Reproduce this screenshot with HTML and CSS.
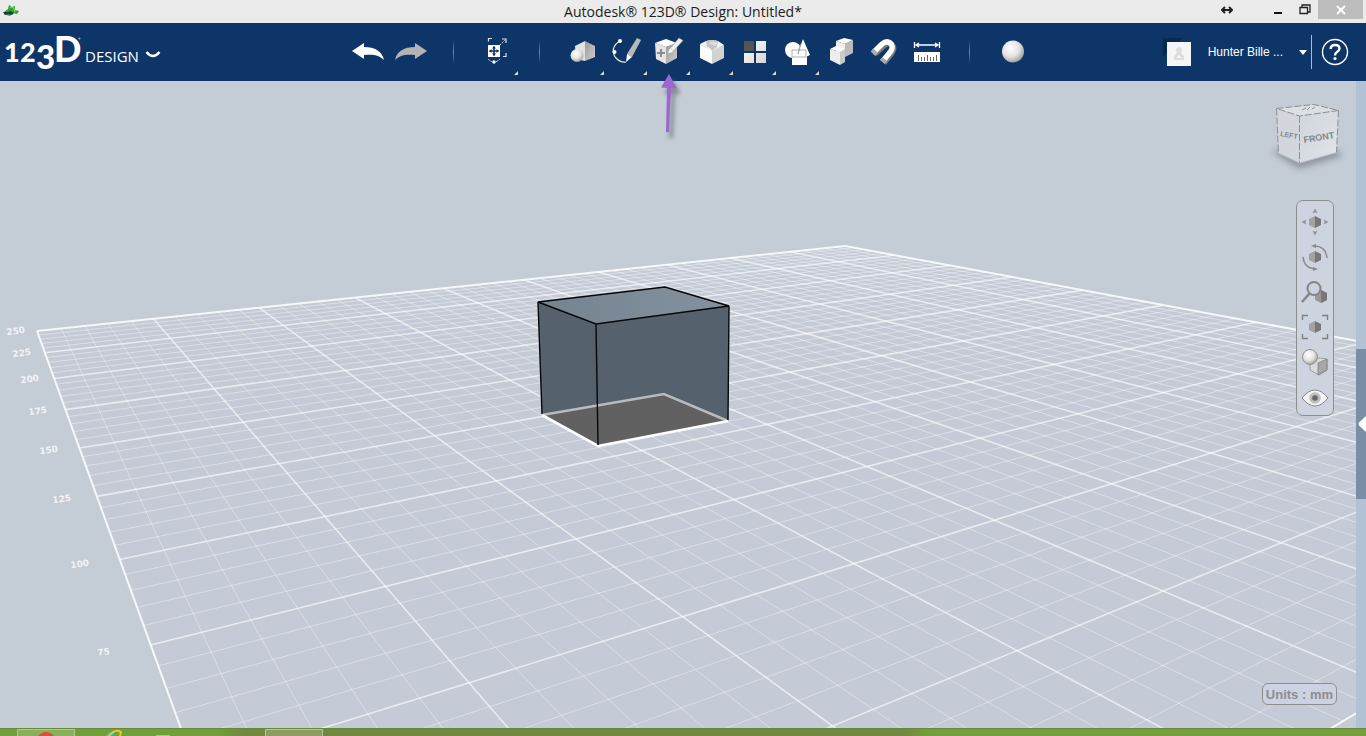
FILE: index.html
```html
<!DOCTYPE html>
<html lang="en">
<head>
<meta charset="utf-8">
<title>Autodesk 123D Design: Untitled*</title>
<link rel="stylesheet" href="styles.css">
</head>
<body>
<svg class="defs" aria-hidden="true">
  <defs>
    <linearGradient id="face" x1="0" y1="0" x2="1" y2="1"><stop offset="0" stop-color="#fff"/><stop offset="1" stop-color="#d4d4d4"/></linearGradient>
    <linearGradient id="shade" x1="0" y1="0" x2="1" y2="1"><stop offset="0" stop-color="#999"/><stop offset="1" stop-color="#d0d0d0"/></linearGradient>
    <radialGradient id="ball" cx=".4" cy=".35" r=".65"><stop offset="0" stop-color="#fff"/><stop offset=".6" stop-color="#e2e2e2"/><stop offset="1" stop-color="#a9a49e"/></radialGradient>
    <linearGradient id="boxtop" x1="0" y1="0" x2="1" y2="0"><stop offset="0" stop-color="#75838f"/><stop offset="1" stop-color="#84919e"/></linearGradient>
    <linearGradient id="cube-front" x1="0" y1="0" x2="1" y2="1"><stop offset="0" stop-color="#cfd4dc"/><stop offset="1" stop-color="#e2e5e9"/></linearGradient>
    <filter id="soft" x="-50%" y="-50%" width="200%" height="200%"><feGaussianBlur stdDeviation="3"/></filter>
    <filter id="soft-small" x="-100%" y="-20%" width="300%" height="140%"><feGaussianBlur stdDeviation="2"/></filter>
  </defs>
</svg>
<div class="app">
  <header class="titlebar">
    <svg class="app-icon" width="16" height="14" viewBox="0 0 16 14" aria-hidden="true"><path d="M1 8l4-3 1-4 3 2 3-1v4l4 1-2 3-4-1-3 3-4-1-2-1z" fill="#2fa52f"/><path d="M0 8l5 0 2-1 4 2-2 2-4-1-3 1z" fill="#20364f"/><path d="M7 3l4 1 1 4" stroke="#76e55c" fill="none"/></svg>
    <h1 class="title">Autodesk® 123D® Design: Untitled*</h1>
    <div class="window-buttons">
      <button class="win move" aria-label="Resize"><svg width="12" height="8" viewBox="0 0 12 8"><path d="M1 4h10M4 1L1 4l3 3M8 1l3 3-3 3" fill="none" stroke="#222" stroke-width="2"/></svg></button>
      <button class="win" aria-label="Minimize"><svg width="10" height="10" viewBox="0 0 10 10"><path d="M1 8h8" stroke="#111" stroke-width="2"/></svg></button>
      <button class="win" aria-label="Restore"><svg width="12" height="11" viewBox="0 0 12 11"><path d="M3 3V1h8v7H9M1 3.500h7.500v6H1z" fill="none" stroke="#222" stroke-width="1.300"/></svg></button>
      <button class="win close" aria-label="Close"><svg width="10" height="10" viewBox="0 0 10 10"><path d="M1 1l8 8M9 1L1 9" stroke="#fff" stroke-width="2"/></svg></button>
    </div>
  </header>

  <nav class="toolbar" aria-label="Main toolbar">
    <button class="brand" aria-label="123D Design menu">
      <svg width="162" height="50" viewBox="0 0 162 50">
        <g class="logo" fill="#fff"><text class="logo-small" x="4" y="35">1</text><text class="logo-small" x="20" y="35">2</text><text class="logo-mid" x="36" y="42">3</text><text class="logo-big" x="54" y="35">D</text></g>
        <text class="logo-word" fill="#fff" x="85" y="35">DESIGN</text>
        <circle cx="79.500" cy="11.500" r="1" fill="#9fb2ca"/>
        <path d="M146.500 25q3 4 6.500 4t6.500-4" fill="none" stroke="#fff" stroke-width="2.400"/>
      </svg>
    </button>
    <div class="tools">
      <button class="tool" aria-label="Undo"><svg viewBox="0 0 36 36"><path d="M2 18L14 10v4c11 0 18 4 20 13-5-5-10-6-20-5v4z" fill="#fff"/></svg></button>
      <button class="tool" aria-label="Redo"><svg viewBox="0 0 36 36"><path d="M34 18L22 10v4C11 14 4 18 2 27c5-5 10-6 20-5v4z" fill="#b3b3b3"/></svg></button>
      <span class="divider"></span>
      <button class="tool flag" aria-label="Transform"><svg viewBox="5 1 36 36"><path d="M14 13h12v12H14z" fill="#fff"/><path d="M20 14.500v9M15.500 19h9" fill="none" stroke="#0e3567" stroke-width="1.600"/><path d="M20 14l2 2.500h-4zM20 24l2-2.500h-4zM15 19l2.500-2v4zM25 19l-2.500-2v4z" fill="#0e3567"/><path d="M14.500 9.500v-3H18M28 7h4v4M32 21v3.500h-3" fill="none" stroke="#dce3ec" stroke-width="1.200"/><path d="M26 13l5-5" stroke="#dce3ec" stroke-dasharray="1.500 1"/><path d="M14 27q6 6 12 0" fill="none" stroke="#dce3ec" stroke-dasharray="2 1"/><circle cx="20" cy="30" r="1.700" fill="#fff"/></svg></button>
      <span class="divider"></span>
      <button class="tool flag" aria-label="Primitives"><svg viewBox="0 0 36 36"><path d="M10 13l10-5v20l-9-2z" fill="#e2e2e2"/><path d="M20 8l10 5v11l-10 4z" fill="url(#shade)"/><circle cx="12" cy="22.500" r="6.500" fill="url(#ball)"/></svg></button>
      <button class="tool flag" aria-label="Sketch"><svg viewBox="0 0 36 36"><path d="M12 8C5 12 3 19 8 25q5 5 10 4" fill="none" stroke="#e5e9ef" stroke-width="1.200"/><circle cx="12" cy="8" r="2" fill="#fff"/><circle cx="6.500" cy="19" r="2" fill="#fff"/><path d="M29 5l4 2-9 17-5-3z" fill="#b9b9b9"/><path d="M19 21l5 3-6 5z" fill="#fff"/></svg></button>
      <button class="tool flag" aria-label="Construct"><svg viewBox="0 0 36 36"><path d="M4 10l11-4 11 4-11 4z" fill="#fff"/><path d="M4 10l11 4v17L5 26z" fill="#e5e5e5"/><path d="M15 14l11-4v15l-11 6z" fill="url(#shade)"/><path d="M10 16v8M6 20h8" stroke="#8c8c8c" stroke-width="2"/><path d="M28 5l4 2.500-10 11-3-3z" fill="#eee" stroke="#999" stroke-width=".5"/><path d="M19 15.500l3 3-5 2z" fill="#fff"/></svg></button>
      <button class="tool flag" aria-label="Modify"><svg viewBox="0 0 36 36"><path d="M6 11l6-3 6-1 6 1 6 4-12 7z" fill="#f2f2f2"/><path d="M6 11l12 7v13L6 25z" fill="#fafafa"/><path d="M18 18l12-6v13l-12 6z" fill="#d2d2d2"/><path d="M12 8q6-2 12 0l-1 6q-3 2-5 4-2-4-5-4z" fill="#c4c4c4"/><path d="M15 9q4-1 8 0l-1 4q-5-1-7-4z" fill="#dedede"/></svg></button>
      <button class="tool flag" aria-label="Pattern"><svg viewBox="0 0 36 36"><path d="M7 8h10v10H7z" fill="#555"/><path d="M19 8h10v10H19zM7 20h10v10H7zM19 20h10v10H19z" fill="url(#face)"/></svg></button>
      <button class="tool flag" aria-label="Grouping"><svg viewBox="0 0 36 36"><circle cx="13" cy="17" r="8" fill="#fff"/><path d="M23 6l7 16q-6 4-13 0z" fill="#fff"/><path d="M12 21h15v11H12z" fill="#fff"/><path d="M12 22v-5h14v7H12zM18 21l3-10q-2 3-3 10" fill="none" stroke="#999" stroke-width=".8"/></svg></button>
      <button class="tool" aria-label="Combine"><svg viewBox="0 0 36 36"><path d="M13 8l8-3 9 2-8 4z" fill="#fff"/><path d="M13 8l9 3v14l-9-5z" fill="#eee"/><path d="M22 11l8-4v13l-8 4z" fill="#bbb"/><path d="M7 16l6-3 9 3-5 3z" fill="#fff"/><path d="M7 16l10 3v13L7 27z" fill="#ededed"/><path d="M17 19l5-3v13l-5 3z" fill="#c9c9c9"/></svg></button>
      <button class="tool" aria-label="Snap"><svg viewBox="0 0 36 36"><path d="M8 20l9-8c6-5 13 0 8 7l-8 10" fill="none" stroke="#77777d" stroke-width="5.500" transform="translate(1 1)"/><path d="M8 19l8-8c6-5 13 0 9 7l-8 10" fill="none" stroke="#fff" stroke-width="5.500"/><path d="M6 17l4.500 4.500M15 25.500l5 4" stroke="#aaa" stroke-width="4"/></svg></button>
      <button class="tool" aria-label="Measure"><svg viewBox="0 0 36 36"><path d="M5.500 9v6M30.500 9v6M8 12h20M10 10l-3 2 3 2M26 10l3 2-3 2" fill="none" stroke="#fff" stroke-width="1.300"/><path d="M5 19h26v10H5z" fill="#fff"/><path d="M9.500 22v6M12.500 24v4M15.500 24v4M18.500 22v6M21.500 24v4M24.500 24v4M27.500 22v6" stroke="#666"/></svg></button>
      <span class="divider"></span>
      <button class="tool" aria-label="Material"><svg viewBox="0 0 36 36"><circle cx="18" cy="18.500" r="11" fill="url(#ball)"/></svg></button>
    </div>
    <div class="account">
      <button class="user"><svg width="28" height="28" viewBox="-4 -4 28 28" aria-hidden="true"><path d="M-4-4h20L-4 15z" fill="#082a4c"/><path d="M0 0h24v24H0z" fill="#f5f5f5"/><path d="M12 5a3.500 3.500 0 0 1 2 6l3 3v4H7v-4l3-3a3.500 3.500 0 0 1 2-6z" fill="#ddd"/><path d="M9 16l3-3 3 3z" fill="#f5f5f5"/></svg><span class="user-name">Hunter Bille ...</span><span class="caret"></span></button>
      <button class="help" aria-label="Help"><svg width="28" height="28" viewBox="0 0 28 28"><circle cx="14" cy="14" r="12.500" fill="none" stroke="#fff" stroke-width="1.400"/><path d="M9.500 11q.5-4 4.500-4 4.500 0 4.500 3.500 0 2-2.500 3.500-2 1.300-2 3.500" fill="none" stroke="#fff" stroke-width="2.400"/><circle cx="14" cy="20.500" r="1.600" fill="#fff"/></svg></button>
    </div>
    <svg class="pointer" width="28" height="68" viewBox="0 0 28 68" aria-hidden="true"><path d="M15 2l8 14h-6l-2 44h-4l2-44H6z" transform="translate(4 5)" fill="#5c636c" opacity=".6" filter="url(#soft-small)"/><path d="M15 1L23 15.500l-6-.5-2 44h-3l1-44-6-.5z" fill="#9e66cf"/></svg>
  </nav>

  <main class="workspace">
    <section class="scene" aria-label="Modeling canvas">
      <svg class="canvas" viewBox="0 81 1356 647" preserveAspectRatio="xMidYMid slice">
        <g id="grid"></g>
        <g id="ruler" class="ruler"></g>
        <path d="M538 302l58 22 133-18-1 115-64-27-122 21z" fill="#55626d"/>
        <path d="M542 415l122-21 64 27-130 25z" fill="#606160"/>
        <path d="M538 302l127-15 64 19-133 18z" fill="url(#boxtop)"/>
        <path d="M542 415l122-21 64 27" fill="none" stroke="#b9bbbd" stroke-width="2.500"/>
        <path d="M542 415l56 31 130-25" fill="none" stroke="#fff" stroke-width="2.600"/>
        <path d="M538 302l127-15 64 19-133 18zl4 112M596 324l2 121M729 306l-1 114" fill="none" stroke="#050709" stroke-width="1.400"/>
      </svg>
      <svg class="viewcube" width="84" height="76" viewBox="1265 98 84 76" role="img" aria-label="View cube">
        <path d="M1272 152l27 17 44-13-24-20z" fill="#79818d" opacity=".7" filter="url(#soft)"/>
        <path d="M1276.500 108.500l37.500-4 24.500 6-39 5.500z" fill="#dce0e5"/>
        <path d="M1276.500 108.500l23 7.500v47l-21-10z" fill="#d3d7dd"/>
        <path d="M1299.500 116l39-5.500-2 42-37 10.500z" fill="url(#cube-front)"/>
        <path d="M1276.500 108.500l37.500-4 24.500 6-39 5.500zl2 44.500M1299.500 116v47M1338.500 110.500l-2 42" fill="none" stroke="#8d8f91" stroke-dasharray="7 2"/>
        <path d="M1278.500 153l21 10 37-10.500" fill="none" stroke="#bfc3c9"/>
        <path d="M1302 110l4-2M1307 110l3-3M1312 109l3-2" stroke="#8d8f91"/>
        <text class="cube-text" transform="translate(1304 143) rotate(-9)">FRONT</text>
        <text class="cube-text side" transform="translate(1280 136) rotate(10)">LEFT</text>
      </svg>
      <div class="navbar" role="toolbar" aria-label="Navigation">
        <button aria-label="Pan"><svg viewBox="0 0 28 28"><path d="M8 11l6-3v12l-6-3z" fill="#a2a2a2"/><path d="M14 8l6 3v6l-6 3z" fill="#777"/><path d="M12 5l2-4 2 4-2-1zM12 23l2 4 2-4-2 1zM5 12l-4 2 4 2-1-2zM23 12l4 2-4 2 1-2z" fill="#909090" stroke="#909090" stroke-width=".5"/></svg></button>
        <button aria-label="Orbit"><svg viewBox="0 0 28 28"><path d="M8 11l6-3v12l-6-3z" fill="#a2a2a2"/><path d="M14 8l6 3v6l-6 3z" fill="#777"/><path d="M13 3q12 0 13 12M2 14q1 11 12 12" fill="none" stroke="#8b8b8b" stroke-width="1.500"/><path d="M10 3l5-2v4zM17 26l-5-2v4z" fill="#888"/></svg></button>
        <button aria-label="Zoom"><svg viewBox="0 0 28 28"><path d="M14 15l6-3 6 3v7l-6 3-6-3z" fill="#999"/><path d="M20 12l6 3v7l-6 3z" fill="#777"/><circle cx="13" cy="10.500" r="6.500" fill="#ccd3de" stroke="#848484" stroke-width="2"/><path d="M8.500 15.500L1 24" stroke="#848484" stroke-width="2.500"/></svg></button>
        <button aria-label="Fit"><svg viewBox="0 0 28 28"><path d="M8 11l6-3v12l-6-3z" fill="#a2a2a2"/><path d="M14 8l6 3v6l-6 3z" fill="#777"/><path d="M1.500 7V2.500H7M21 2.500h5.500V7M26.500 21v4.500H21M7 25.500H1.500V21" fill="none" stroke="#808080" stroke-width="1.400"/></svg></button>
        <button aria-label="Shading"><svg viewBox="0 0 28 28"><path d="M9 12l9-2 8 1v11l-8 5-9-5z" fill="#d8dadd" stroke="#888" stroke-width=".7"/><path d="M17 15l9-4v11l-9 5z" fill="#a8a8a8" stroke="#777" stroke-width=".7"/><circle cx="9" cy="9" r="7.500" fill="url(#ball)" stroke="#919191"/></svg></button>
        <button aria-label="Visibility"><svg viewBox="0 0 28 28"><path d="M1 15Q14-1 27 15 14 31 1 15z" fill="#f4f4f4" stroke="#858585"/><circle cx="14" cy="15" r="5.800" fill="#bdbdbd"/><circle cx="14" cy="15" r="2.800" fill="#666"/></svg></button>
      </div>
      <button class="units">Units : mm</button>
    </section>
    <aside class="side-strip"><button class="side-handle" aria-label="Open side panel"><svg width="8" height="16" viewBox="0 0 8 16"><path d="M8 0v16L1 9.500Q0 8 1 6.500z" fill="#fff"/></svg></button></aside>
  </main>

  <footer class="taskbar">
    <button class="task open" aria-label="Browser"><svg width="20" height="6" viewBox="0 0 20 6"><path d="M2 6q8-8 16 0z" fill="#db4c3d"/></svg></button>
    <button class="task" aria-label="Internet Explorer"><svg width="24" height="8" viewBox="0 0 24 8"><path d="M5 8q4-6 11-6l-5 6z" fill="#41b7e8"/><path d="M8 8Q15-1 21 3l-1 4" fill="none" stroke="#f0c818" stroke-width="2"/></svg></button>
    <button class="task files" aria-label="Files"><svg width="18" height="8" viewBox="0 0 18 8"><path d="M2 6h14v2H1z" fill="#c9b878"/></svg></button>
    <button class="task open last" aria-label="123D Design"></button>
  </footer>
</div>
<script src="scene.js"></script>
</body>
</html>
```
FILE: styles.css
```css
* { box-sizing: border-box; }
body { margin: 0; background: #c4ccd6; font-family: "Liberation Sans", Arial, sans-serif; }
button { margin: 0; padding: 0; border: 0; background: none; color: inherit; font: inherit; cursor: pointer; }
svg { display: block; }
.defs { position: absolute; width: 0; height: 0; }
.app { display: flex; flex-direction: column; height: 100vh; overflow: hidden; }

.titlebar { display: grid; grid-template-columns: 1fr auto 1fr; flex: none; height: 23px; background: #ebebeb; }
.app-icon { margin: 4px 0 0 3px; }
.title { margin: 0; color: #1c1c1c; font: 400 14px/23px "Open Sans", "Noto Sans", sans-serif; }
.window-buttons { display: flex; justify-content: flex-end; height: 19px; padding-right: 3px; }
.win { display: grid; place-items: center; width: 27px; height: 19px; }
.win.move { margin-right: 24px; }
.win.close { width: 45px; background: #bcbcbc; }

.toolbar { position: relative; display: grid; grid-template-columns: 1fr auto 1fr; align-items: center; flex: none; height: 58px; background: #0e3567; color: #fff; }
.brand { justify-self: start; }
.logo { font-family: Lato, "Open Sans", sans-serif; font-weight: 900; }
.logo-small { font-size: 27px; }
.logo-mid { font-size: 33px; }
.logo-big { font-size: 36px; }
.logo-word { font: 400 15px "Open Sans", "Noto Sans", sans-serif; }
.tools { display: flex; align-items: center; margin-left: 14px; }
.tool { position: relative; display: grid; place-items: center; width: 43px; height: 58px; padding-bottom: 2px; }
.tool svg { width: 36px; height: 36px; }
.flag::after { content: ""; position: absolute; right: 0; bottom: 6px; border: solid transparent; border-width: 0 0 4px 4px; border-bottom-color: #d8d8d8; }
.divider { width: 1px; height: 24px; margin: 0 21px; background: linear-gradient(transparent, #7f8590, transparent); }
.account { display: flex; justify-self: end; align-items: center; padding-right: 17px; }
.user { display: flex; align-items: center; height: 34px; padding-right: 4px; border-right: 1px solid #93c1ea; font-size: 12px; }
.user-name { margin: 0 16px 0 17px; }
.caret { border: 4px solid transparent; border-top: 5px solid #fff; border-bottom: 0; }
.help { margin-left: 9px; }
.pointer { position: absolute; left: 654px; top: 50px; z-index: 2; }

.workspace { display: flex; flex: 1; min-height: 0; }
.scene { position: relative; flex: 1; min-width: 0; overflow: hidden; }
.canvas { width: 100%; height: 100%; }
.ground { fill: #c4cbd6; }
.minor { stroke: #fff; stroke-opacity: .38; stroke-width: 1; }
.major { stroke: #fff; stroke-opacity: .62; stroke-width: 1.6; }
.edge { stroke: #fff; stroke-opacity: .85; stroke-width: 2; }
.ruler text { fill: #fff; fill-opacity: .8; font: 700 9px "DejaVu Sans", sans-serif; text-anchor: middle; }
.viewcube { position: absolute; top: 17px; right: 7px; }
.cube-text { fill: #82868d; font: 700 9px "Liberation Sans", Arial, sans-serif; }
.cube-text.side { font-size: 7px; }
.navbar { position: absolute; top: 119px; right: 22px; display: flex; flex-direction: column; width: 38px; padding: 3px 0 1px; border: 1px solid #8c8e90; border-radius: 7px; background: #cdd4e0; }
.navbar button { display: grid; place-items: center; height: 35px; }
.navbar svg { width: 28px; height: 28px; }
.units { position: absolute; right: 19px; bottom: 23px; height: 22px; padding: 0 3px; border: 1px solid #8e8e92; border-radius: 6px; background: #ccd2e1; color: #8c8d92; font-size: 13px; font-weight: 700; }
.side-strip { flex: none; width: 10px; padding-top: 268px; background: #b2c1d4; }
.side-handle { display: grid; place-items: center end; width: 100%; height: 150px; background: #7a8ea5; }

.taskbar { display: flex; flex: none; height: 8px; padding-left: 17px; overflow: hidden; border-top: 1px solid #668a3a; background: linear-gradient(100deg, #719f39 0 16%, #72873f 18% 66%, #749f3a 68%); }
.task { display: flex; justify-content: center; width: 58px; height: 12px; }
.task.open { border: 1px solid #b5c694; background: rgba(220, 225, 190, .25); }
.task + .task { margin-left: 8px; }
.task + .files { margin-left: -7px; }
.task + .last { margin-left: 73px; }
```
FILE: scene.js
```js
// Build plate: 250 x 250 mm, a thin line every 5 mm and a heavy one every 25 mm.
const NS = 'http://www.w3.org/2000/svg';

// Perspective projection from plate cells (25 mm each) to canvas units.
function project(col, row) {
  const w = 1 + 0.05157 * col - 0.07927 * row;
  return [
    (37 + 124.38 * col + 4.297 * row) / w,
    (331 + 4.186 * col - 6.272 * row) / w
  ];
}

function add(parent, tag, attrs) {
  const el = document.createElementNS(NS, tag);
  for (const name in attrs) el.setAttribute(name, attrs[name]);
  parent.appendChild(el);
  return el;
}

const grid = document.getElementById('grid');
const corners = [project(0, 0), project(10, 0), project(10, 10), project(0, 10)];
add(grid, 'polygon', { class: 'ground', points: corners.join(' ') });

function line(from, to, kind) {
  add(grid, 'line', { class: kind, x1: from[0], y1: from[1], x2: to[0], y2: to[1] });
}

for (let i = 0; i <= 50; i++) {
  const kind = i % 50 === 0 ? 'edge' : i % 5 === 0 ? 'major' : 'minor';
  const at = i / 5;
  line(project(at, 0), project(at, 10), kind);
  line(project(0, at), project(10, at), kind);
}

const ruler = document.getElementById('ruler');
[[250, 16, 334], [225, 22, 356], [200, 30, 382], [175, 38, 414],
 [150, 49, 453], [125, 62, 502], [100, 80, 567], [75, 104, 655]
].forEach(([value, x, y]) => {
  add(ruler, 'text', { transform: `translate(${x} ${y}) rotate(-7)` }).textContent = value;
});
```
